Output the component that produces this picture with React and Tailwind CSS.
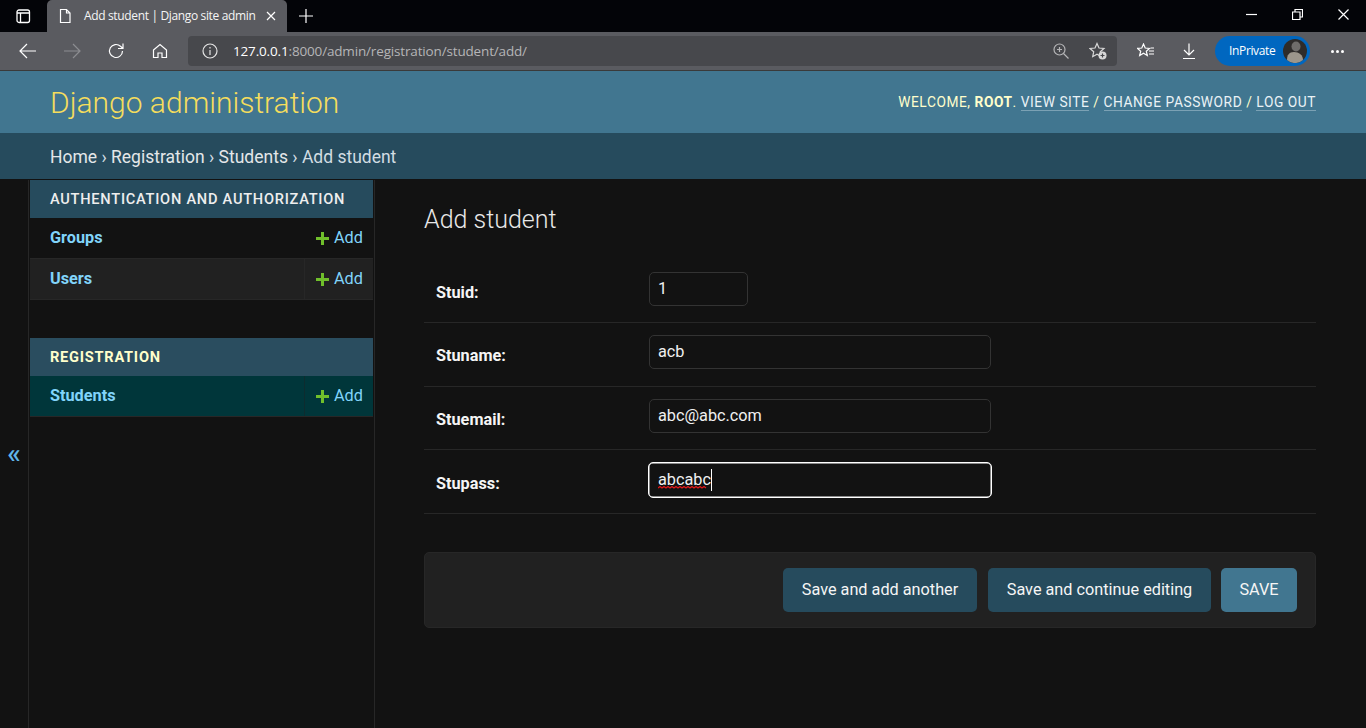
import React from "react";

const Ic = ({ w = 16, h = 16, vb, children, cls = "" }) => (
  <svg width={w} height={h} viewBox={vb || `0 0 ${w} ${h}`} fill="none" stroke="currentColor" strokeWidth="1.2" className={cls}>{children}</svg>
);

const Plus = () => (
  <svg width="13" height="13" viewBox="0 0 13 13" className="shrink-0">
    <path d="M5 0h3v5h5v3H8v5H5V8H0V5h5z" fill="#70bf2b" />
  </svg>
);

function TabStrip() {
  return (
    <div className="h-8 bg-[#030408] flex items-end text-white shrink-0">
      <div className="w-[47px] h-8 flex items-center justify-center pr-[1px]">
        <Ic w={16} h={16}><rect x="2" y="2" width="12.500" height="12.500" rx="2" strokeWidth="1.3" /><path d="M2 5h12.500M5.500 5v9.500" strokeWidth="1.3" /></Ic>
      </div>
      <div className="w-[240px] h-8 bg-[#5a5b60] rounded-t-[5px] flex items-center pl-[10px] pr-[11px]">
        <Ic w={16} h={16} cls="shrink-0"><path d="M3.500 1.500h6l3.500 3.500v9.500h-9.500zM9.500 1.500V5H13" /></Ic>
        <span className="ml-[11px] text-[12px] text-[#f5f5f5] whitespace-nowrap font-['Open_Sans'] tracking-[-0.35px] flex-1">Add student | Django site admin</span>
        <Ic w={10} h={10}><path d="M1 1l8 8M9 1l-8 8" /></Ic>
      </div>
      <div className="w-[38px] h-8 flex items-center justify-center">
        <Ic w={14} h={14}><path d="M7 0v14M0 7h14" /></Ic>
      </div>
      <div className="flex-1" />
      <div className="h-8 flex items-center pb-[4px]">
        <div className="w-[46px] flex justify-center"><Ic w={11} h={11}><path d="M0 5.500h11" /></Ic></div>
        <div className="w-[46px] flex justify-center"><Ic w={11} h={11}><path d="M0.500 3h7.500v7.500H0.500zM3 3V0.500h7.500V8H8" /></Ic></div>
        <div className="w-[46px] flex justify-center"><Ic w={11} h={11}><path d="M0.500 0.500l10 10M10.500 0.500l-10 10" /></Ic></div>
      </div>
    </div>
  );
}

function Toolbar() {
  return (
    <div className="h-[38px] bg-[#5a5b60] flex items-center shrink-0 text-white">
      <div className="w-[56px] flex justify-center"><Ic w={18} h={16}><path d="M1 8h16M8 1L1 8l7 7" /></Ic></div>
      <div className="w-[32px] flex justify-center text-[#8c8d91]"><Ic w={18} h={16}><path d="M1 8h16M10 1l7 7-7 7" /></Ic></div>
      <div className="w-[56px] flex justify-center"><Ic w={18} h={18}><path d="M15.500 9a6.500 6.500 0 1 1-2-4.700L16 6.500M16 1.500v5h-5" /></Ic></div>
      <div className="w-[32px] flex justify-center"><Ic w={16} h={16}><path d="M1.500 7L8 1.500 14.500 7v7.500h-4.500V10H6v4.500H1.500z" /></Ic></div>
      <div className="ml-[12px] w-[929px] h-[30px] bg-[#47484c] rounded-[4px] flex items-center pl-[14px] pr-[10px]">
        <Ic w={16} h={16} cls="text-[#e4e4e4]"><circle cx="8" cy="8" r="7" /><path d="M8 7v5M8 4v1.500" /></Ic>
        <div className="ml-[15px] text-[13.500px] font-['Open_Sans'] whitespace-nowrap flex-1 tracking-[-0.16px]">
          <span className="text-white">127.0.0.1</span><span className="text-[#b5b5b7]">:8000/admin/registration/student/add/</span>
        </div>
        <div className="text-[#b5b5b7] mr-[20px]">
          <Ic w={16} h={16}><circle cx="6.500" cy="6.500" r="5.500" /><path d="M10.500 10.500l5 5M6.500 4v5M4 6.500h5" /></Ic>
        </div>
        <div className="text-[#d8d8d8]">
          <Ic w={18} h={18}><path d="M8 1.500l2 4.500 5 .5-3.700 3.300 1 4.900L8 12.300l-4.300 2.400 1-4.900L1 6.500l5-.5z" /><circle cx="13.500" cy="13.500" r="4" fill="#d8d8d8" stroke="none" /><path d="M13.500 11.500v4M11.500 13.500h4" stroke="#47484c" /></Ic>
        </div>
      </div>
      <div className="ml-[20px] w-[18px] flex"><Ic w={18} h={16}><path d="M6.500 1l1.700 4 4.300.4-3.200 2.800 1 4.300-3.800-2.300-3.800 2.300 1-4.300L.5 5.400 4.800 5z" /><path d="M13.500 5h3.500M12 8h5M12 11h5" /></Ic></div>
      <div className="ml-[27px] w-[16px] flex"><Ic w={14} h={16}><path d="M7 0.500v11M2 7l5 5 5-5M1 15.500h12" /></Ic></div>
      <div className="ml-[17px] w-[95px] h-[30px] rounded-full bg-[#0067c0] flex items-center pl-[14px] pr-[3px]">
        <span className="text-[12px] font-['Open_Sans'] flex-1 whitespace-nowrap text-white tracking-[-0.35px]">InPrivate</span>
        <svg width="24" height="24" viewBox="0 0 24 24" className="shrink-0">
          <circle cx="12" cy="12" r="12" fill="#2e2c2a" />
          <ellipse cx="13" cy="7.500" rx="4.500" ry="5" fill="#6f6d6a" />
          <path d="M4 21c0-5 2-8 7-8s9 3 9 8a12 12 0 0 1-16 0z" fill="#9c968b" />
        </svg>
      </div>
      <div className="ml-[21px] flex gap-[2px]">
        <span className="w-[3px] h-[3px] rounded-full bg-white" /><span className="w-[3px] h-[3px] rounded-full bg-white" /><span className="w-[3px] h-[3px] rounded-full bg-white" />
      </div>
    </div>
  );
}

function ModelRow({ name, bg = "", divider = "border-[#272727]", bottom = "border-[#272727]" }) {
  return (
    <div className={`flex h-[41px] border-b ${bottom} ${bg}`}>
      <div className="flex-1 pl-5 flex items-center text-[16.250px] font-bold text-[#81d4fa] pt-[1px]">{name}</div>
      <div className={`w-[69px] border-l ${divider} flex items-center pl-[11px] gap-[5px] text-[16.250px] text-[#81d4fa] pt-[1px]`}>
        <Plus />
        <span>Add</span>
      </div>
    </div>
  );
}

function Field({ label, value, width, focus }) {
  return (
    <div className="h-[63.500px] border-b border-[#272727] flex items-start pl-3">
      <div className={`w-[213px] font-bold text-[16.250px] text-[#f5f5f5] ${focus ? "pt-[22px]" : "pt-[21px]"}`}>{label}</div>
      <div
        className={`${focus ? "-ml-px h-[36px] border border-white w-[344px] pl-[9px] shadow-[inset_0_0_0_0.5px_#ffffff]" : "h-[34px] border border-[#333333] pl-2"} mt-[12px] rounded-[5px] flex items-center text-[16.250px] text-[#f0f0f0]`}
        style={focus ? undefined : { width }}
      >
        {focus ? (
          <span className="-mt-[1px] relative border-r border-white leading-[22px]">
            {value}
            <svg width="50" height="3" viewBox="0 0 50 3" className="absolute left-0 top-[17px]" fill="none" stroke="#e01818" strokeWidth="1.300">
              <path d="M0 2l2-1.500 2 1.500 2-1.500 2 1.500 2-1.500 2 1.500 2-1.500 2 1.500 2-1.500 2 1.500 2-1.500 2 1.500 2-1.500 2 1.500 2-1.500 2 1.500 2-1.500 2 1.500 2-1.500 2 1.500 2-1.500 2 1.500 2-1.500 2 1.500" />
            </svg>
          </span>
        ) : (
          <span className="pt-[1px]">{value}</span>
        )}
      </div>
    </div>
  );
}

export default function App() {
  return (
    <div className="h-[728px] w-[1366px] overflow-hidden flex flex-col bg-[#121212] font-['Roboto',sans-serif]">
      <TabStrip />
      <Toolbar />
      <div className="h-px bg-[#3a3a3a] shrink-0" />
      <header className="h-[62px] bg-[#417690] flex items-center justify-between px-[50px] shrink-0">
        <div className="text-[30px] font-light text-[#f5dd5d] whitespace-nowrap">Django administration</div>
        <div className="text-[13.750px] text-[#ffc] whitespace-nowrap tracking-[0.55px] uppercase">
          Welcome, <strong className="font-bold">Root</strong>.{" "}
          <a className="text-[#eaf2f6] border-b border-[#7ba1b4]">View site</a> /{" "}
          <a className="text-[#eaf2f6] border-b border-[#7ba1b4]">Change password</a> /{" "}
          <a className="text-[#eaf2f6] border-b border-[#7ba1b4]">Log out</a>
        </div>
      </header>
      <div className="h-[46px] bg-[#264b5d] flex items-center px-[50px] pt-[2px] text-[17.500px] text-[#d2dde3] shrink-0 whitespace-nowrap">
        <span className="text-[#e4e7e9]">Home</span>&nbsp;›&nbsp;<span className="text-[#e4e7e9]">Registration</span>&nbsp;›&nbsp;<span className="text-[#e4e7e9]">Students</span>&nbsp;›&nbsp;Add student
      </div>
      <div className="flex-1 flex min-h-0 pt-px">
        <div className="w-[29px] border-r border-[#272727] flex items-center justify-center text-[#60b7ea] text-[28px] font-medium leading-none">«</div>
        <aside className="w-[346px] border-r border-[#272727] pl-px pr-px">
          <div className="h-[38px] bg-[#264b5d] pl-5 pt-[1px] flex items-center text-[14.600px] font-medium text-[#eeeeee] tracking-[0.75px] uppercase">Authentication and Authorization</div>
          <ModelRow name="Groups" divider="border-transparent" />
          <ModelRow name="Users" bg="bg-[#212121]" />
          <div className="h-[38px]" />
          <div className="h-[38px] bg-[#2a4d5f] pl-5 pt-[1px] flex items-center text-[14.600px] font-bold text-[#ffffcc] tracking-[0.75px] uppercase">Registration</div>
          <ModelRow name="Students" bg="bg-[#00363a]" divider="border-[#0d2c2f]" />
        </aside>
        <main className="flex-1 pl-[49px] pr-[50px]">
          <h1 className="text-[25px] font-light text-[#e8e8e8] mt-[24px] h-[55.500px] leading-[32px]">Add student</h1>
          <Field label="Stuid:" value="1" width={99} />
          <Field label="Stuname:" value="acb" width={342} />
          <Field label="Stuemail:" value="abc@abc.com" width={342} />
          <Field label="Stupass:" value="abcabc" focus />
          <div className="mt-[38px] h-[76px] bg-[#212121] border border-[#272727] rounded-[5px] flex items-center justify-end pr-[18px] gap-[10px] text-[16.250px]">
            <div className="h-[44px] w-[194px] mr-px pt-[2px] rounded-[5px] bg-[#264b5d] text-[#f5f5f5] flex items-center justify-center">Save and add another</div>
            <div className="h-[44px] w-[223px] pt-[2px] rounded-[5px] bg-[#264b5d] text-[#f5f5f5] flex items-center justify-center">Save and continue editing</div>
            <div className="h-[44px] w-[76px] pt-[2px] rounded-[5px] bg-[#417690] text-[#f5f5f5] flex items-center justify-center">SAVE</div>
          </div>
        </main>
      </div>
    </div>
  );
}
